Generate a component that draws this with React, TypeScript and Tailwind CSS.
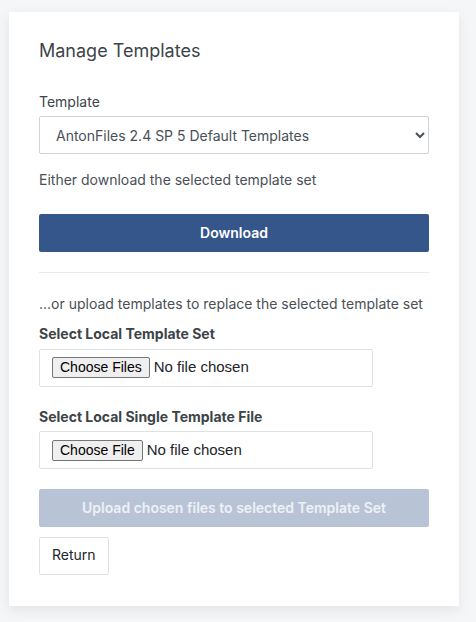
import React from 'react';

const templates = ['AntonFiles 2.4 SP 5 Default Templates', 'AntonFiles 2.3 Default Templates'];

const fileInput =
  "font-['Liberation_Sans',Arial,sans-serif] text-[15px] leading-[19px] text-[#212529] file:mr-[4px] file:h-[21px] file:rounded-[2px] file:border file:border-solid file:border-[#767676] file:bg-[#efefef] file:px-[7px] file:text-[14px] file:text-black";

export default function App() {
  return (
    <div className="min-h-[622px] bg-[#f5f6f8] pt-[12px] pl-[9px] font-['Inter',sans-serif] text-[14px] leading-[21px] text-[#495057]">
      <div className="w-[450px] bg-white px-[30px] pt-[28px] pb-[31px] shadow-[0_4px_12px_rgba(0,0,0,0.08)]">
        <h1 className="text-[18px] leading-[21.6px] text-[#3d4449]">Manage Templates</h1>

        <label className="mt-[29px] mb-[4.5px] block text-[#3d4449]">Template</label>
        <select
          defaultValue={templates[0]}
          className="block h-[38px] w-full rounded-[2px] border border-[#ced4da] bg-white px-3 text-[14px] text-[#495057]"
        >
          {templates.map((t) => (
            <option key={t}>{t}</option>
          ))}
        </select>

        <p className="mt-[14.5px]">Either download the selected template set</p>

        <button className="mt-[24.5px] h-[38px] w-full rounded-[2px] bg-[#34568b] pb-[2px] font-semibold text-white">
          Download
        </button>

        <hr className="mt-[20px] border-t border-[#e9ecef]" />

        <p className="mt-[20px]">...or upload templates to replace the selected template set</p>

        <label className="mt-[9px] mb-[4.5px] block font-bold text-[#3d4449]">Select Local Template Set</label>
        <div className="flex h-[38px] w-[334px] items-center rounded-[2px] border border-[#dee2e6] px-3">
          <input type="file" multiple className={fileInput} />
        </div>

        <label className="mt-[19px] mb-[4.5px] block font-bold text-[#3d4449]">Select Local Single Template File</label>
        <div className="flex h-[38px] w-[334px] items-center rounded-[2px] border border-[#dee2e6] px-3">
          <input type="file" className={fileInput} />
        </div>

        <button
          disabled
          className="mt-[20px] h-[38px] w-full rounded-[2px] bg-[#b8c4d6] pb-[2px] font-semibold text-[#eef1f6]"
        >
          Upload chosen files to selected Template Set
        </button>

        <button className="mt-[10px] block h-[38px] rounded-[2px] border border-[#dee2e6] bg-white px-3 pb-[4px] text-[#212529]">
          Return
        </button>
      </div>
    </div>
  );
}
